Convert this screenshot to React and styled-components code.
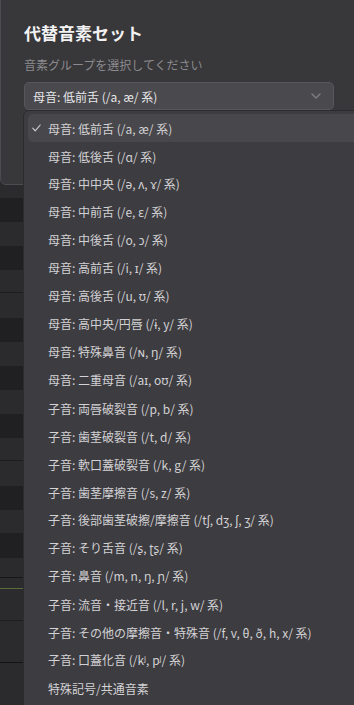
import React from "react";
import styled, { createGlobalStyle } from "styled-components";

const Global = createGlobalStyle`
  html, body { margin: 0; padding: 0; background: #2b2b2d; }
  body { font-family: "Noto Sans CJK JP", "Noto Sans", sans-serif; }
  * { box-sizing: border-box; }
`;

const Screen = styled.div`
  position: relative;
  width: 354px;
  height: 705px;
  overflow: hidden;
  background: #2b2b2d;
`;

const Table = styled.div`
  display: flex;
  flex-direction: column;
  padding-top: 184px;
`;

const Row = styled.div`
  height: ${(p) => p.$h}px;
  background: ${(p) => (p.$dark ? "#202022" : "#2b2b2d")};
  border-bottom: ${(p) => (p.$line ? `1px solid ${p.$line}` : "none")};
`;

const Dialog = styled.div`
  position: absolute;
  left: 0;
  top: -10px;
  width: 390px;
  height: 195px;
  background: #38373a;
  border: 1px solid #4c4b4f;
  border-radius: 6px;
  padding: 30px 0 0 23px;
  display: flex;
  flex-direction: column;
`;

const Title = styled.h2`
  margin: 0;
  font-size: 17px;
  line-height: 24px;
  font-weight: 700;
  color: #f2f2f3;
`;

const Subtitle = styled.p`
  margin: 11px 0 0;
  font-size: 12px;
  line-height: 18px;
  color: #8b8a8e;
`;

const Select = styled.div`
  margin-top: 8px;
  width: 310px;
  height: 28px;
  border: 1px solid #58575b;
  border-radius: 5px;
  background: #4a494d;
  display: flex;
  align-items: center;
  justify-content: space-between;
  padding: 0 12px 0 8px;
  font-size: 12px;
  color: #e6e6e8;
`;

const Chevron = () => (
  <svg width="10" height="6" viewBox="0 0 10 6" fill="none">
    <path d="M1 1l4 4 4-4" stroke="#7f7e83" strokeWidth="1.4" strokeLinecap="round" strokeLinejoin="round" />
  </svg>
);

const Menu = styled.div`
  position: absolute;
  left: 23px;
  top: 110px;
  width: 345px;
  height: 620px;
  background: #3d3c40;
  border: 1px solid #2c2b2e;
  border-radius: 6px;
  padding: 3px 4px;
  display: flex;
  flex-direction: column;
`;

const Item = styled.div`
  position: relative;
  height: 28px;
  flex: none;
  display: flex;
  align-items: center;
  padding-left: 20px;
  border-radius: 5px;
  font-size: 12px;
  color: #d2d1d4;
  white-space: nowrap;
  background: ${(p) => (p.$active ? "#48474b" : "transparent")};
`;

const CheckMark = styled.span`
  position: absolute;
  left: 4px;
  top: 50%;
  transform: translateY(-50%);
  display: flex;
`;

const Check = () => (
  <svg width="9" height="8" viewBox="0 0 9 8" fill="none">
    <path d="M0.8 4.2l2.4 2.6L8.2 1" stroke="#d2d1d4" strokeWidth="1.1" strokeLinecap="round" strokeLinejoin="round" />
  </svg>
);

const rows = [
  [14, false], [24, true], [24, false], [24, true], [23, false, "#1c1c1e"],
  [25, false], [24, true], [24, false], [24, true], [24, false], [24, true],
  [23, false, "#1c1c1e"], [25, false], [24, true], [23, false], [25, true],
  [20, false, "#161617"], [11, false, "#5c6b3c"], [32, false, "#1e1e20"],
  [42, false, "#141415"], [40, false],
];

const items = [
  "母音: 低前舌 (/a, æ/ 系)",
  "母音: 低後舌 (/ɑ/ 系)",
  "母音: 中中央 (/ə, ʌ, ɤ/ 系)",
  "母音: 中前舌 (/e, ɛ/ 系)",
  "母音: 中後舌 (/o, ɔ/ 系)",
  "母音: 高前舌 (/i, ɪ/ 系)",
  "母音: 高後舌 (/u, ʊ/ 系)",
  "母音: 高中央/円唇 (/ɨ, y/ 系)",
  "母音: 特殊鼻音 (/ɴ, ŋ/ 系)",
  "母音: 二重母音 (/aɪ, oʊ/ 系)",
  "子音: 両唇破裂音 (/p, b/ 系)",
  "子音: 歯茎破裂音 (/t, d/ 系)",
  "子音: 軟口蓋破裂音 (/k, g/ 系)",
  "子音: 歯茎摩擦音 (/s, z/ 系)",
  "子音: 後部歯茎破擦/摩擦音 (/tʃ, dʒ, ʃ, ʒ/ 系)",
  "子音: そり舌音 (/ʂ, ʈʂ/ 系)",
  "子音: 鼻音 (/m, n, ŋ, ɲ/ 系)",
  "子音: 流音・接近音 (/l, r, j, w/ 系)",
  "子音: その他の摩擦音・特殊音 (/f, v, θ, ð, h, x/ 系)",
  "子音: 口蓋化音 (/kʲ, pʲ/ 系)",
  "特殊記号/共通音素",
];

export default function App() {
  return (
    <Screen>
      <Global />
      <Table>
        {rows.map(([h, dark, line], i) => (
          <Row key={i} $h={h} $dark={dark} $line={line} />
        ))}
      </Table>
      <Dialog>
        <Title>代替音素セット</Title>
        <Subtitle>音素グループを選択してください</Subtitle>
        <Select>
          <span>母音: 低前舌 (/a, æ/ 系)</span>
          <Chevron />
        </Select>
      </Dialog>
      <Menu>
        {items.map((t, i) => (
          <Item key={t} $active={i === 0}>
            {i === 0 && (
              <CheckMark>
                <Check />
              </CheckMark>
            )}
            {t}
          </Item>
        ))}
      </Menu>
    </Screen>
  );
}
